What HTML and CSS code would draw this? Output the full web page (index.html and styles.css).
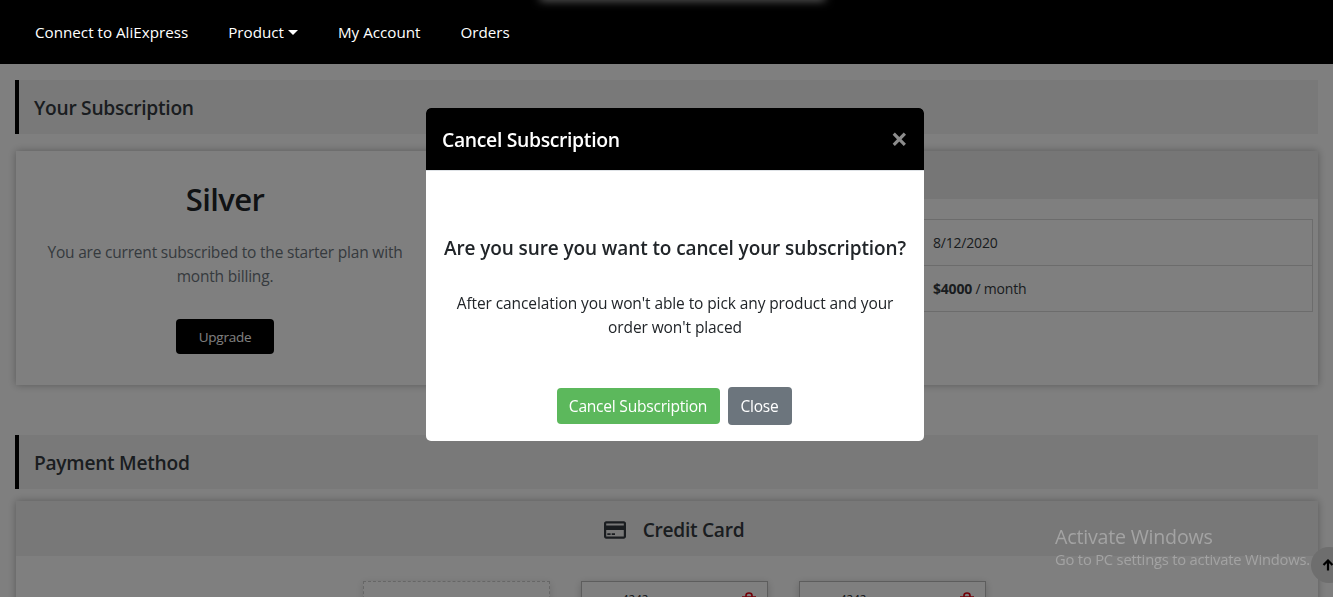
FILE: index.html
```html
<!DOCTYPE html>
<html lang="en">
<head>
<meta charset="utf-8">
<title>Subscription</title>
<link rel="stylesheet" href="styles.css">
</head>
<body>
<nav class="navbar">
  <a class="nav-link">Connect to AliExpress</a>
  <a class="nav-link">Product<span class="caret"></span></a>
  <a class="nav-link">My Account</a>
  <a class="nav-link">Orders</a>
</nav>
<main class="page">
  <h2 class="section-title">Your Subscription</h2>
  <section class="card plan-card">
    <div class="plan-left">
      <h1 class="plan-name">Silver</h1>
      <p class="plan-text">You are current subscribed to the starter plan with month billing.</p>
      <a class="btn btn-black">Upgrade</a>
    </div>
    <div class="plan-right">
      <div class="plan-head">Plan Details</div>
      <div class="plan-table">
        <div class="plan-row"><span class="plan-label">Next billing</span><span class="plan-value">8/12/2020</span></div>
        <div class="plan-row"><span class="plan-label">Price</span><span class="plan-value"><b>$4000</b> / month</span></div>
      </div>
    </div>
  </section>
  <h2 class="section-title payment-title">Payment Method</h2>
  <section class="card pay-card">
    <div class="pay-head">
      <svg class="card-icon" viewBox="2 4 20 16" width="22" height="18"><path fill="currentColor" d="M20 4H4c-1.11 0-1.99.89-1.99 2L2 18c0 1.11.89 2 2 2h16c1.11 0 2-.89 2-2V6c0-1.11-.89-2-2-2zm0 14H4v-6h16v6zm0-10H4V6h16v2zM5 15h3v1.5H5zM9 15h3v1.5H9z"/></svg>
      <span>Credit Card</span>
    </div>
    <div class="pay-grid">
      <div class="add-card"></div>
      <div class="saved-card"><span class="num">4242</span><svg class="trash" viewBox="0 0 16 16" width="16" height="16"><path fill="none" stroke="currentColor" stroke-width="1.6" d="M1 5h14M5 5V3.5C5 2 6.5 1 8 1s3 1 3 2.5V5M3 5v10h10V5"/></svg></div>
      <div class="saved-card"><span class="num">4242</span><svg class="trash" viewBox="0 0 16 16" width="16" height="16"><path fill="none" stroke="currentColor" stroke-width="1.6" d="M1 5h14M5 5V3.5C5 2 6.5 1 8 1s3 1 3 2.5V5M3 5v10h10V5"/></svg></div>
    </div>
  </section>
</main>
<div class="backdrop"></div>
<div class="top-glow"></div>
<div class="modal">
  <header class="modal-head">
    <span class="modal-title">Cancel Subscription</span>
    <span class="modal-close">×</span>
  </header>
  <div class="modal-body">
    <h3 class="modal-q">Are you sure you want to cancel your subscription?</h3>
    <p class="modal-text">After cancelation you won't able to pick any product and your order won't placed</p>
  </div>
  <footer class="modal-foot">
    <a class="btn btn-green">Cancel Subscription</a>
    <a class="btn btn-grey">Close</a>
  </footer>
</div>
<div class="activate">
  <div class="activate-title">Activate Windows</div>
  <div class="activate-sub">Go to PC settings to activate Windows.</div>
</div>
<div class="to-top"><svg viewBox="0 0 12 12" width="12" height="12"><path fill="none" stroke="#000" stroke-width="2.2" d="M6 11.5V2M1.5 6L6 1.5 10.5 6"/></svg></div>
</body>
</html>
```
FILE: styles.css
```css
* { box-sizing: border-box; }
html, body { margin: 0; height: 597px; overflow: hidden; }
body { font-family: "Open Sans", "Noto Sans", sans-serif; font-size: 15px; color: #212529; background: #fff; }

.navbar { position: relative; z-index: 2; background: #000; height: 64px; display: flex; align-items: center; padding-left: 35px; gap: 40px; }
.nav-link { color: #fff; font-size: 15.2px; }
.caret { display: inline-block; margin-left: 4px; vertical-align: 3px; border-top: 5px solid #fff; border-left: 5px solid transparent; border-right: 5px solid transparent; }

.page { padding: 16px 15px 0; }
.section-title { margin: 0; height: 54px; display: flex; align-items: center; padding: 0 0 0 15px; background: #f2f2f2; border-left: 4px solid #000; font-size: 19.2px; font-weight: 600; color: #343a40; letter-spacing: -0.28px; }
.payment-title { margin-top: 50px; }

.card { margin: 17px 0 0 1px; background: #fff; box-shadow: 0 0 8px rgba(0,0,0,.3); }
.plan-card { height: 234px; display: flex; }
.plan-left { width: 418px; padding: 25px 16px 0; text-align: center; }
.plan-name { margin: 0; font-size: 31px; line-height: 46px; font-weight: 600; color: #212529; letter-spacing: -0.6px; }
.plan-text { margin: 18px 0 0; font-size: 15.5px; line-height: 24px; color: #6c757d; letter-spacing: -0.2px; }
.btn { display: inline-flex; align-items: center; justify-content: center; border-radius: 4px; letter-spacing: -0.25px; }
.btn-black { margin-top: 31px; width: 98px; height: 35px; background: #000; color: #fff; font-size: 13.5px; }
.plan-right { flex: 1; }
.plan-head { height: 48px; background: #ededed; }
.plan-table { margin: 20px 5px 0 16px; border: 1px solid #d8d8d8; }
.plan-row { display: flex; height: 45px; align-items: center; font-size: 14px; letter-spacing: -0.2px; color: #343a40; }
.plan-row + .plan-row { height: 46px; border-top: 1px solid #d8d8d8; }
.plan-label { width: 482px; padding-left: 16px; }
.plan-value b { font-weight: 700; }

.pay-card { margin-top: 12px; height: 200px; }
.pay-head { height: 55px; background: #f0f0f0; display: flex; align-items: center; justify-content: center; gap: 17px; padding: 2px 0 0 14px; font-size: 19.2px; font-weight: 600; color: #343a40; letter-spacing: -0.3px; }
.card-icon { color: #343a40; }
.pay-grid { display: flex; gap: 31px; padding: 25px 0 0 347px; }
.add-card { width: 187px; height: 90px; border: 1px dashed #ccc; box-shadow: 0 2px 8px rgba(0,0,0,.15); }
.saved-card { width: 187px; height: 90px; border: 1px solid #bbb; box-shadow: 0 2px 8px rgba(0,0,0,.2); display: flex; justify-content: space-between; padding: 5px 10px 0 40px; font-size: 11.5px; }
.trash { color: #e3000f; margin-top: 5px; }
.num { color: #212529; padding-top: 4px; }

.backdrop { position: fixed; inset: 0; z-index: 1; background: rgba(0,0,0,.5); }
.top-glow { position: fixed; z-index: 3; left: 540px; top: -6px; width: 285px; height: 6px; box-shadow: 0 0 10px rgba(255,255,255,.5); }

.modal { position: fixed; z-index: 4; left: 426px; top: 108px; width: 498px; height: 333px; background: #fff; border-radius: 5px; overflow: hidden; display: flex; flex-direction: column; }
.modal-head { height: 63px; flex: none; background: #000; color: #fff; display: flex; align-items: center; justify-content: space-between; padding: 0 16px 0 16px; border-bottom: 1px solid #dee2e6; }
.modal-title { font-size: 19.4px; font-weight: 600; letter-spacing: -0.35px; }
.modal-close { font-size: 30px; font-weight: 700; color: #8c8c8c; line-height: 1; }
.modal-body { flex: 1; text-align: center; padding: 0 16px; }
.modal-q { margin: 63px 0 0; font-size: 19px; font-weight: 600; line-height: 28px; letter-spacing: -0.1px; white-space: nowrap; color: #212529; }
.modal-text { margin: 29px auto 0; width: 445px; font-size: 15.5px; line-height: 24px; letter-spacing: -0.1px; }
.modal-foot { display: flex; justify-content: center; align-items: center; gap: 8px; padding: 0 2px 16px 0; }
.btn-green { width: 163px; height: 36px; background: #5cb85c; color: #fff; font-size: 15.6px; }
.btn-grey { width: 64px; height: 38px; background: #6c757d; color: #fff; font-size: 15.5px; }

.activate { position: fixed; z-index: 5; left: 1055px; top: 525px; color: #a3a3a3; white-space: nowrap; }
.activate-title { font-size: 19.6px; line-height: 24px; letter-spacing: -0.2px; }
.activate-sub { font-size: 14.75px; line-height: 21px; letter-spacing: -0.2px; }
.to-top { position: fixed; z-index: 5; left: 1311px; top: 547px; width: 36px; height: 36px; border-radius: 50%; background: #6e6e6e; display: flex; align-items: center; padding-left: 11px; }
```
